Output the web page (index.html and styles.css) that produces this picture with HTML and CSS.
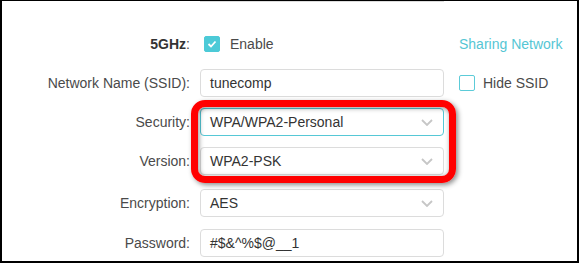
FILE: index.html
```html
<!DOCTYPE html>
<html lang="en">

<head>
  <meta charset="UTF-8" />
  <title>Wireless Settings</title>
  <link rel="stylesheet" href="styles.css">
</head>

<body>
  <div class="frame">
    <div class="prev-edge"></div>

    <div class="field">
      <label class="label"><b>5GHz</b>:</label>
      <div class="control check-line">
        <span class="checkbox checked">
          <svg width="10" height="8" viewBox="0 0 10 8"><path d="M1.5 4l2.5 2.5 4.5-5" fill="none" stroke="#fff" stroke-width="1.8" /></svg>
        </span>
        <span>Enable</span>
      </div>
      <a class="extra link" href="#">Sharing Network</a>
    </div>

    <div class="field">
      <label class="label">Network Name (SSID):</label>
      <div class="control input">tunecomp</div>
      <div class="extra check-line">
        <span class="checkbox"></span>
        <span>Hide SSID</span>
      </div>
    </div>

    <div class="field">
      <label class="label">Security:</label>
      <div class="control input select focused">WPA/WPA2-Personal
        <svg class="chevron" width="12" height="7" viewBox="0 0 12 7"><path d="M1 1l5 5 5-5" fill="none" stroke="#c6c6c6" stroke-width="1.8" /></svg>
      </div>
    </div>

    <div class="field">
      <label class="label">Version:</label>
      <div class="control input select">WPA2-PSK
        <svg class="chevron" width="12" height="7" viewBox="0 0 12 7"><path d="M1 1l5 5 5-5" fill="none" stroke="#c6c6c6" stroke-width="1.8" /></svg>
      </div>
    </div>

    <div class="field enc">
      <label class="label">Encryption:</label>
      <div class="control input select">AES
        <svg class="chevron" width="12" height="7" viewBox="0 0 12 7"><path d="M1 1l5 5 5-5" fill="none" stroke="#c6c6c6" stroke-width="1.8" /></svg>
      </div>
    </div>

    <div class="field pass">
      <label class="label">Password:</label>
      <div class="control input">#$&amp;^%$@__1</div>
    </div>

    <!-- red annotation ring -->
    <div class="highlight"></div>
  </div>
</body>

</html>
```

FILE: styles.css
```css
* {
  box-sizing: border-box;
  margin: 0;
  padding: 0;
  font-family: "Liberation Sans", Arial, sans-serif;
}

body {
  background: #fff;
  color: #4a4a4a;
  font-size: 14px;
}

.frame {
  position: relative;
  width: 579px;
  height: 263px;
  border: solid #000;
  border-width: 1px 2px 2px 2px;
  overflow: hidden;
}

.prev-edge {
  margin-left: 198px;
  width: 244px;
  height: 1px;
  background: #dcdcdc;
}

.field {
  display: flex;
  align-items: center;
  height: 28px;
  margin-top: 11px;
}

.field:nth-of-type(2) {
  margin-top: 28px;
}

.field.enc {
  margin-top: 14px;
}

.field.pass {
  margin-top: 12px;
}

.label {
  width: 188px;
  text-align: right;
  color: #4a4a4a;
}

.label b {
  color: #333;
}

.control {
  width: 244px;
  height: 28px;
  margin-left: 10px;
  display: flex;
  align-items: center;
}

.input {
  border: 1px solid #dcdcdc;
  border-radius: 4px;
  padding-left: 9px;
  color: #333;
}

.select {
  position: relative;
}

.focused {
  border-color: #56c8d6;
}

.chevron {
  position: absolute;
  right: 10px;
  top: 10px;
}

.check-line {
  display: flex;
  align-items: center;
  gap: 10px;
}

.control.check-line {
  padding-left: 4px;
}

.checkbox {
  width: 16px;
  height: 16px;
  border: 1.5px solid #5ccbd8;
  border-radius: 2px;
  display: flex;
  align-items: center;
  justify-content: center;
}

.checkbox.checked {
  background: #4ccad7;
  border-color: #4ccad7;
}

.extra {
  margin-left: 15px;
}

.link {
  color: #55c6d4;
  text-decoration: none;
}

.extra.check-line {
  gap: 8px;
  margin-top: -1px;
}

.highlight {
  position: absolute;
  left: 189px;
  top: 99px;
  width: 265px;
  height: 83px;
  border: 7px solid #ff0000;
  border-radius: 14px;
  box-shadow: 2px 2px 5px rgba(0, 0, 0, 0.45), inset 1px 1px 5px rgba(0, 0, 0, 0.45);
}
```
